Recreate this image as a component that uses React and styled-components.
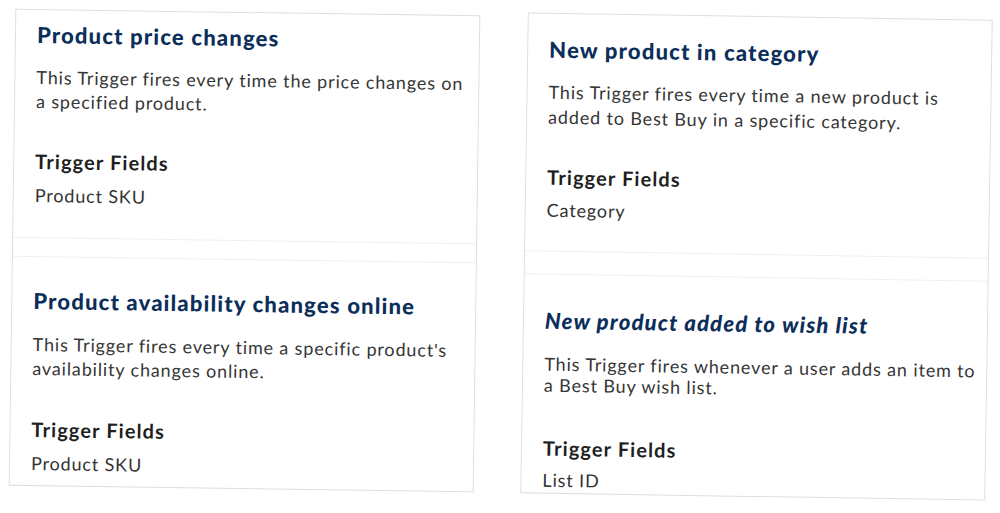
import React from 'react'
import styled, { createGlobalStyle } from 'styled-components'

const GlobalStyle = createGlobalStyle`
  html, body {
    margin: 0;
    padding: 0;
    background: #ffffff;
  }
  body {
    font-family: 'Lato', 'Open Sans', sans-serif;
    -webkit-font-smoothing: antialiased;
  }
`

const Page = styled.div`
  display: flex;
  align-items: flex-start;
  gap: 47px;
  padding: 12px 0 0 12px;
  width: 1000px;
  height: 513px;
  box-sizing: border-box;
  overflow: hidden;
`

const Panel = styled.section`
  width: 465px;
  flex: none;
  box-sizing: border-box;
  margin-top: ${props => props.$offset}px;
  border: 1px solid #dedede;
  background: #ffffff;
  transform: rotate(${props => props.$tilt}deg);
  display: flex;
  flex-direction: column;
`

const Card = styled.div`
  padding: ${props => props.$pt}px 10px ${props => props.$pb}px 21px;
  border-bottom: ${props => (props.$last ? 'none' : '1px solid #efefef')};
  border-top: ${props => (props.$first ? 'none' : '1px solid #efefef')};
`

const Gap = styled.div`
  height: ${props => props.$size}px;
`

const Title = styled.h3`
  margin: 0;
  font-family: 'Lato', sans-serif;
  font-weight: 900;
  font-size: 22px;
  line-height: 26px;
  letter-spacing: 1.2px;
  color: #0c2e5a;
  font-style: ${props => (props.$italic ? 'italic' : 'normal')};
`

const Description = styled.p`
  margin: ${props => props.$gap}px 0 0;
  font-size: 18px;
  line-height: ${props => props.$lh}px;
  letter-spacing: 0.85px;
  color: #363636;
`

const FieldsLabel = styled.h4`
  margin: ${props => props.$gap}px 0 0;
  font-size: 20px;
  font-weight: 700;
  line-height: 24px;
  letter-spacing: 1.1px;
  color: #1f1f1f;
`

const FieldValue = styled.div`
  margin-top: ${props => props.$gap}px;
  font-size: 18px;
  line-height: 23px;
  letter-spacing: 0.85px;
  color: #333333;
`

const panels = [
  {
    tilt: 0.8,
    offset: 0,
    divider: 18,
    cards: [
      {
        title: 'Product price changes',
        text: 'This Trigger fires every time the price changes on a specified product.',
        field: 'Product SKU',
        pt: 12,
        pb: 30,
        titleGap: 17,
        lh: 24,
        labelGap: 36,
        valueGap: 11,
      },
      {
        title: 'Product availability changes online',
        text: "This Trigger fires every time a specific product's availability changes online.",
        field: 'Product SKU',
        pt: 31,
        pb: 10,
        titleGap: 18,
        lh: 24,
        labelGap: 37,
        valueGap: 11,
      },
    ],
  },
  {
    tilt: 0.9,
    offset: 4,
    divider: 22,
    cards: [
      {
        title: 'New product in category',
        text: 'This Trigger fires every time a new product is added to Best Buy in a specific category.',
        field: 'Category',
        pt: 23,
        pb: 29,
        titleGap: 17,
        lh: 25,
        labelGap: 35,
        valueGap: 10,
      },
      {
        title: 'New product added to wish list',
        italic: true,
        text: 'This Trigger fires whenever a user adds an item to a Best Buy wish list.',
        field: 'List ID',
        pt: 33,
        pb: 1,
        titleGap: 20,
        lh: 21,
        labelGap: 40,
        valueGap: 9,
      },
    ],
  },
]

const TriggerCard = ({ card, first, last }) => (
  <Card $pt={card.pt} $pb={card.pb} $first={first} $last={last}>
    <Title $italic={card.italic}>{card.title}</Title>
    <Description $gap={card.titleGap} $lh={card.lh}>
      {card.text}
    </Description>
    <FieldsLabel $gap={card.labelGap}>Trigger Fields</FieldsLabel>
    <FieldValue $gap={card.valueGap}>{card.field}</FieldValue>
  </Card>
)

const App = () => (
  <>
    <GlobalStyle />
    <Page>
      {panels.map((panel, i) => (
        <Panel key={i} $tilt={panel.tilt} $offset={panel.offset}>
          <TriggerCard card={panel.cards[0]} first />
          <Gap $size={panel.divider} />
          <TriggerCard card={panel.cards[1]} last />
        </Panel>
      ))}
    </Page>
  </>
)

export default App
